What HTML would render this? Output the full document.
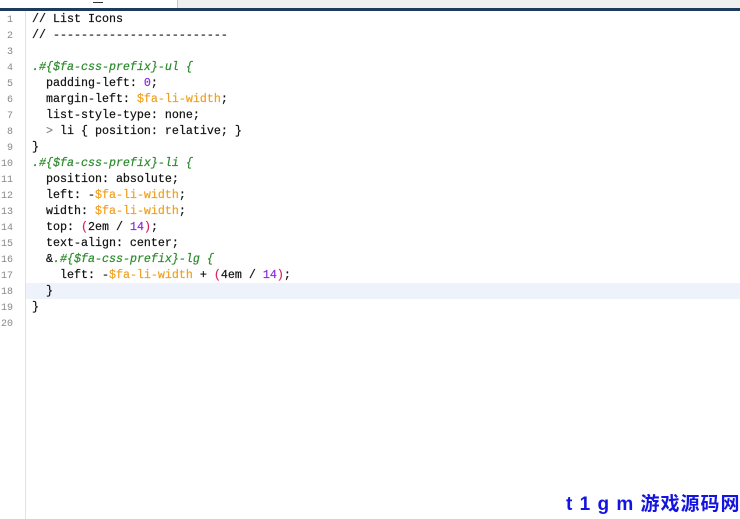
<!DOCTYPE html><html><head><style>
body{margin:0;width:740px;height:519px;background:#fff;position:relative;overflow:hidden;font-family:"Liberation Mono",monospace;}
.tabw{position:absolute;left:0;top:0;width:177px;height:8px;background:#fff;border-right:1px solid #c8c8c8}
.tabg{position:absolute;left:178px;top:0;right:0;height:8px;background:#f0f0f0;border-bottom:1px solid #ccc}
.bar{position:absolute;left:0;top:8px;width:740px;height:3px;background:#1d3b5c}
.dash{position:absolute;left:93px;top:2px;width:10px;height:1px;background:#333}
.gut{position:absolute;left:25px;top:11px;width:1px;height:508px;background:#e2e2e2}
.hl{position:absolute;left:26px;top:283px;width:714px;height:16px;background:#eef3fb}
.ln{position:absolute;left:0;width:13px;text-align:right;font-size:10px;color:#888;line-height:16px}
.c{position:absolute;left:32px;font-size:11.67px;line-height:16px;white-space:pre;color:#111;-webkit-text-stroke:0.2px #111}
.g{color:#2a8a2a;font-style:italic;-webkit-text-stroke:0.2px #2a8a2a}.o{color:#f0a020;-webkit-text-stroke:0.2px #f0a020}.p{color:#8a2be2;-webkit-text-stroke:0.2px #8a2be2}.r{color:#e0205a;-webkit-text-stroke:0.2px #e0205a}.gr{color:#888;-webkit-text-stroke:0.2px #888}
.wm{position:absolute;left:566px;top:489px;font:bold 19px "Liberation Sans","Noto Sans CJK SC",sans-serif;color:#1414e0;letter-spacing:1px;white-space:pre}
</style></head><body>
<div class="tabw"></div><div class="tabg"></div><div class="dash"></div><div class="bar"></div>
<div class="gut"></div><div class="hl"></div>
<div class="c" style="top:11px">// List Icons
// -------------------------

<span class="g">.#{$fa-css-prefix}-ul {</span>
  padding-left: <span class="p">0</span>;
  margin-left: <span class="o">$fa-li-width</span>;
  list-style-type: none;
  <span class="gr">&gt;</span> li { position: relative; }
}
<span class="g">.#{$fa-css-prefix}-li {</span>
  position: absolute;
  left: -<span class="o">$fa-li-width</span>;
  width: <span class="o">$fa-li-width</span>;
  top: <span class="r">(</span>2em / <span class="p">14</span><span class="r">)</span>;
  text-align: center;
  &amp;<span class="g">.#{$fa-css-prefix}-lg {</span>
    left: -<span class="o">$fa-li-width</span> + <span class="r">(</span>4em / <span class="p">14</span><span class="r">)</span>;
  }
}
</div>
<div class="ln" style="top:13px">1<br>2<br>3<br>4<br>5<br>6<br>7<br>8<br>9<br>10<br>11<br>12<br>13<br>14<br>15<br>16<br>17<br>18<br>19<br>20</div>
<div class="wm">t 1 g m 游戏源码网</div>
</body></html>
